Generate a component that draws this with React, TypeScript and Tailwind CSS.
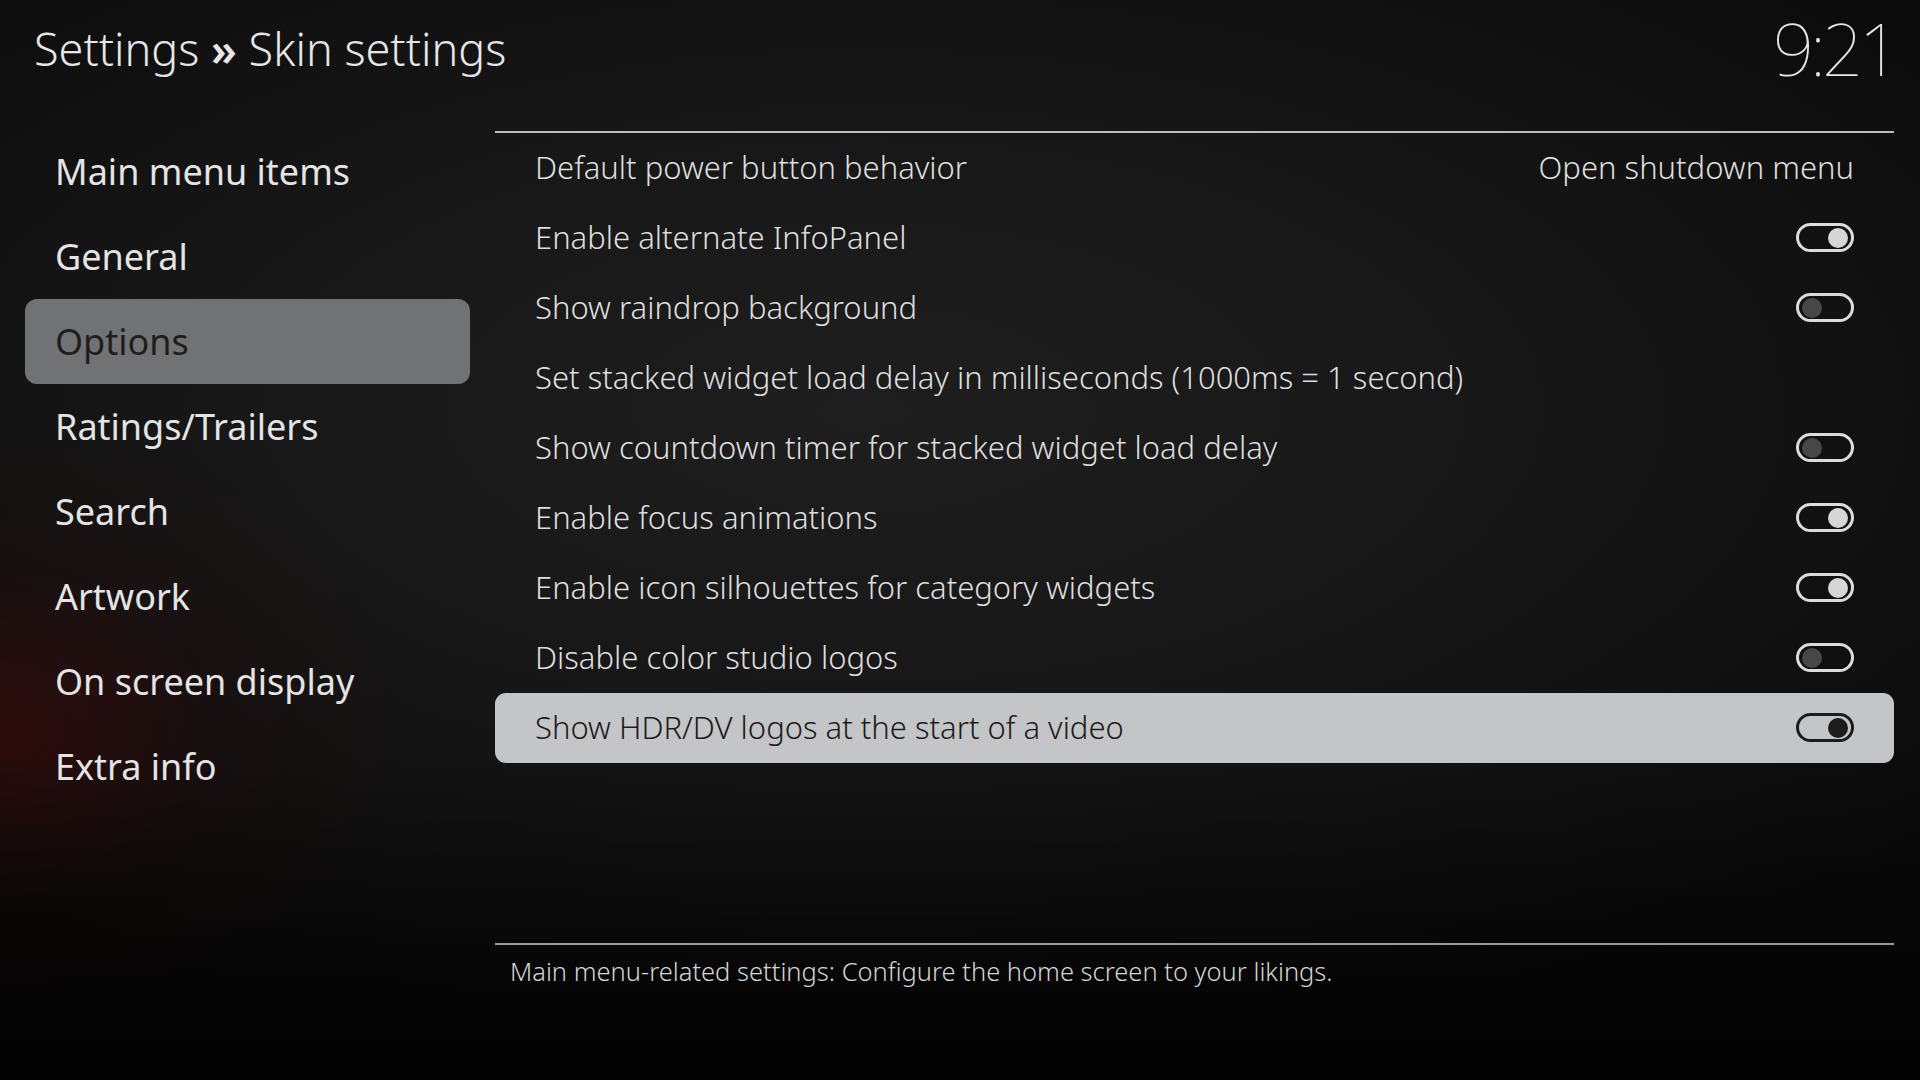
import React from "react"

const menu = [
  "Main menu items",
  "General",
  "Options",
  "Ratings/Trailers",
  "Search",
  "Artwork",
  "On screen display",
  "Extra info",
]

type Row = { label: string; value?: string; toggle?: boolean }

const rows: Row[] = [
  { label: "Default power button behavior", value: "Open shutdown menu" },
  { label: "Enable alternate InfoPanel", toggle: true },
  { label: "Show raindrop background", toggle: false },
  { label: "Set stacked widget load delay in milliseconds (1000ms = 1 second)" },
  { label: "Show countdown timer for stacked widget load delay", toggle: false },
  { label: "Enable focus animations", toggle: true },
  { label: "Enable icon silhouettes for category widgets", toggle: true },
  { label: "Disable color studio logos", toggle: false },
  { label: "Show HDR/DV logos at the start of a video", toggle: true },
]

function Toggle({ on, focused }: { on: boolean; focused: boolean }) {
  // focused row flips to dark strokes on the light bar
  const border = focused ? "border-[#1c1c1c]" : "border-[#dcdcdc]"
  const knob = focused ? "bg-[#1c1c1c]" : on ? "bg-[#d6d6d6]" : "bg-[#474747]"
  return (
    <div
      className={`w-[58px] h-[29px] rounded-full border-[3px] ${border} flex items-center px-[3px] ${
        on ? "justify-end" : "justify-start"
      }`}
    >
      <div className={`w-[20px] h-[20px] rounded-full ${knob}`} />
    </div>
  )
}

export default function App() {
  const selectedMenu = 2
  const focusedRow = 8

  return (
    <div
      className="relative w-[1920px] h-[1080px] overflow-hidden text-[#e2e2e2] bg-[#0b0b0b]"
      style={{ fontFamily: '"Noto Sans", "Open Sans", sans-serif' }}
    >
      {/* Background glow */}
      <div className="absolute inset-0 bg-[radial-gradient(ellipse_75%_60%_at_45%_38%,#1e1e1e_0%,#171717_45%,#0a0a0a_100%)]" />
      <div className="absolute inset-0 bg-[radial-gradient(ellipse_22%_30%_at_0%_68%,rgba(70,10,10,0.55)_0%,rgba(40,8,8,0.25)_50%,rgba(0,0,0,0)_100%)]" />
      <div className="absolute inset-0 bg-[linear-gradient(to_bottom,rgba(0,0,0,0)_70%,rgba(0,0,0,0.75)_100%)]" />

      <div className="relative flex flex-col h-full">
        {/* Header */}
        <div className="flex justify-between items-start h-[129px]">
          <div className="pl-[34px] pt-[18px] text-[45px] leading-[62px] font-light text-[#e6e6e6]">
            Settings <span className="font-semibold">»</span> Skin settings
          </div>
          <div className="pr-[24px] pt-0 text-[72px] leading-[96px] font-thin text-[#e6e6e6] tracking-[-4px]">
            9:21
          </div>
        </div>

        <div className="flex flex-1">
          {/* Left menu */}
          <div className="w-[470px] pl-[25px] flex flex-col">
            {menu.map((item, i) => (
              <div
                key={item}
                className={`h-[85px] w-[445px] flex items-center pl-[30px] text-[36px] rounded-[12px] ${
                  i === selectedMenu ? "bg-[#717273] text-[#1e1e1e]" : "text-[#e4e4e4]"
                }`}
              >
                {item}
              </div>
            ))}
          </div>

          {/* Settings list */}
          <div className="ml-[25px] w-[1399px] flex flex-col">
            <div className="h-[2px] bg-[#bdbdbd] mt-[2px]" />
            <div className="flex flex-col">
              {rows.map((row, i) => {
                const focused = i === focusedRow
                return (
                  <div
                    key={row.label}
                    className={`h-[70px] flex items-center justify-between px-[40px] pb-[1px] text-[31px] font-light rounded-[11px] ${
                      focused ? "bg-[#c4c5c7] text-[#1c1c1c]" : "text-[#dedede]"
                    }`}
                  >
                    <span>{row.label}</span>
                    {row.value && <span>{row.value}</span>}
                    {row.toggle !== undefined && <Toggle on={row.toggle} focused={focused} />}
                  </div>
                )
              })}
            </div>
            <div className="flex-1" />
            <div className="h-[2px] bg-[#9a9a9a]" />
            <div className="h-[135px] pl-[15px] pt-[7px] text-[25.5px] font-light text-[#d4d4d4]">
              Main menu-related settings: Configure the home screen to your likings.
            </div>
          </div>
        </div>
      </div>
    </div>
  )
}
